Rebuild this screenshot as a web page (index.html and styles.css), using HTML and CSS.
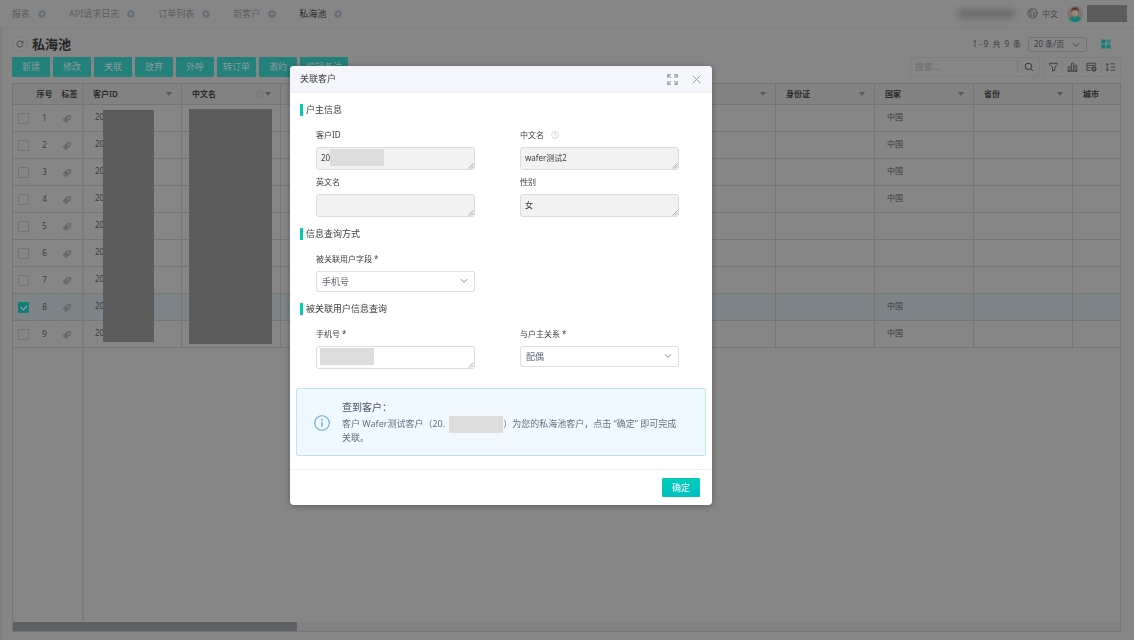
FILE: index.html
```html
<!DOCTYPE html>
<html lang="zh-CN">
<head>
<meta charset="utf-8">
<meta name="viewport" content="width=device-width, initial-scale=1">
<title>私海池</title>
<link rel="stylesheet" href="styles.css">
</head>
<body>
<svg class="defs" aria-hidden="true">
  <symbol id="close-dot" viewBox="0 0 8 8"><circle cx="4" cy="4" r="3.800" fill="#666e76"/><path d="M2.700 2.700l2.600 2.600m0-2.600L2.700 5.300" stroke="#8a8a8a" stroke-width=".9"/></symbol>
  <symbol id="tag" viewBox="0 0 10 10"><path fill="#6a6a6a" fill-rule="evenodd" d="M5.400 1.300L8.400 1q.8 0 .8.800L9 4.600 4.600 8.700q-.6.5-1.200 0L1.100 6.500q-.5-.6 0-1.200zM6.700 2.500a1 1 0 1 0 .01 0z"/></symbol>
  <symbol id="chevron" viewBox="0 0 8 6"><path d="M1 1.300l3 3 3-3" fill="none" stroke="currentColor"/></symbol>
  <symbol id="help" viewBox="0 0 8 8"><circle cx="4" cy="4" r="3.500" fill="none" stroke="currentColor" stroke-width=".7"/><path d="M2.900 3.200q0-1.200 1.100-1.200t1.100 1q0 .7-.7 1Q4 4.300 4 4.900M4 5.500v.8" fill="none" stroke="currentColor" stroke-width=".7"/></symbol>
  <symbol id="grip" viewBox="0 0 6 6"><path d="M.5 5.500l5-5M3 5.500L5.500 3" stroke="#888" stroke-width=".7"/></symbol>
</svg>

<div class="app">
  <header class="topbar">
    <nav class="tabs">
      <a class="tab" href="#">报表<svg><use href="#close-dot"/></svg></a>
      <a class="tab" href="#">API请求日志<svg><use href="#close-dot"/></svg></a>
      <a class="tab" href="#">订单列表<svg><use href="#close-dot"/></svg></a>
      <a class="tab" href="#">新客户<svg><use href="#close-dot"/></svg></a>
      <a class="tab active" href="#">私海池<svg><use href="#close-dot"/></svg></a>
    </nav>
    <div class="user">
      <span class="company"></span>
      <button class="lang" type="button"><svg viewBox="0 0 11 11"><circle cx="5.500" cy="5.500" r="4.800" fill="none" stroke="#4a4a4a" stroke-width=".8"/><path d="M2.500 2.200l2.300-.5.8 1.200-1.500 1-.3 1.300-2-.7zM6.300 4.800l2.500-.7.8 1.400-1.500 1.300-.5 2.400-1-.2-.2-2.200zM2.600 6l1.700.8-.5 2.200z" fill="none" stroke="#4a4a4a" stroke-width=".7"/></svg>中文</button>
      <svg class="avatar" viewBox="0 0 16 16"><circle cx="8" cy="8" r="8" fill="#7d7572"/><path d="M2 13q2-3 6-3t6 3q-2 3-6 3t-6-3z" fill="#138079"/><path d="M6.500 9h3v2q-1.500 1.300-3 0z" fill="#94766a"/><path d="M5 4.500h6V7q0 3-3 3T5 7z" fill="#a08578"/><path d="M4.300 5.500Q3.800 1.500 8 1.200q4.200.2 3.700 4.300l-.8.3q0-1.600-1-2-2 .8-3.800.2-.8.500-.9 1.700z" fill="#5b3631"/></svg>
      <span class="username"></span>
    </div>
  </header>

  <main class="page">
    <div class="heading">
      <button class="refresh" type="button" aria-label="刷新"><svg viewBox="0 0 8 8"><path d="M6.300 2.100A3 3 0 1 0 7 4.500M7 1v2H5" fill="none" stroke="#3c3c3c" stroke-width=".8"/></svg></button>
      <h1>私海池</h1>
      <span class="count">1 - 9&ensp;共&ensp;9&ensp;条</span>
      <span class="picker size"><select aria-label="每页条数"><option>20 条/页</option></select><svg><use href="#chevron"/></svg></span>
      <svg class="grid-icon" viewBox="0 0 10 10"><path d="M.5.500h4v4h-4zM.5 5.500h4v4h-4zM5.500 5.500h4v4h-4z" fill="#117f75"/><path d="M6.100 1.100h2.800v2.800H6.100z" fill="none" stroke="#117f75"/></svg>
    </div>
    <div class="toolbar">
      <button class="action" type="button">新建</button>
      <button class="action" type="button">修改</button>
      <button class="action" type="button">关联</button>
      <button class="action" type="button">放弃</button>
      <button class="action" type="button">外呼</button>
      <button class="action" type="button">转订单</button>
      <button class="action" type="button">邀约</button>
      <button class="action" type="button">编辑备注</button>
      <div class="search"><input type="text" placeholder="搜索..." aria-label="搜索"><button type="button" aria-label="搜索"><svg viewBox="0 0 10 10"><circle cx="4.400" cy="4.400" r="3.200" fill="none" stroke="#333"/><path d="M6.800 6.800L9 9" stroke="#333"/></svg></button></div>
      <div class="tools">
        <button type="button" aria-label="筛选"><svg viewBox="0 0 10 10"><path d="M1 1.300h8v1.300L6.300 5.300v2.900l-2.300.8V5.300L1 2.600z" fill="none" stroke="#3a3a3a" stroke-width=".9"/></svg></button>
        <button type="button" aria-label="图表"><svg viewBox="0 0 10 10"><path d="M.7 4.500h1.800v4.200H.7zM4 1h2v7.700H4zM7.500 3.300h1.800v5.400H7.500zM0 9.300h10" fill="none" stroke="#3a3a3a" stroke-width=".8"/></svg></button>
        <button type="button" aria-label="列设置"><svg viewBox="0 0 12 10"><path d="M1 .8h9.500v2.400H1zM1 5.800h4M1 8.800h4M1 3v6" fill="none" stroke="#3a3a3a" stroke-width=".9"/><circle cx="8.700" cy="7" r="2.100" fill="none" stroke="#3a3a3a" stroke-width="1.400"/><circle cx="8.700" cy="7" r=".6" fill="#3a3a3a"/></svg></button>
        <button type="button" aria-label="行高"><svg viewBox="0 0 12 10"><path d="M2.500 1v8M.8 2.700L2.500 1l1.700 1.700M.8 7.300L2.500 9l1.700-1.700M6 1.500h5M6 5h5M6 8.500h5" fill="none" stroke="#3a3a3a" stroke-width=".9"/></svg></button>
      </div>
    </div>

    <div class="grid">
      <table>
        <colgroup><col class="c-check"><col class="c-no"><col class="c-tag"><col span="11" class="c-data"></colgroup>
        <thead><tr><th></th><th>序号</th><th>标签</th><th><div>客户ID<i></i></div></th><th><div>中文名<svg><use href="#help"/></svg><i></i></div></th><th><div>英文名<i></i></div></th><th><div>性别<i></i></div></th><th><div>手机号<i></i></div></th><th><div>邮箱<i></i></div></th><th><div>生日<i></i></div></th><th><div>身份证<i></i></div></th><th><div>国家<i></i></div></th><th><div>省份<i></i></div></th><th><div>城市<i></i></div></th></tr></thead>
        <tbody id="rows"></tbody>
      </table>
      <div class="frozen-line"></div>
      <div class="mask mask-id"></div>
      <div class="mask mask-name"></div>
      <div class="scroll"><div class="thumb"></div></div>
    </div>
  </main>
</div>

<div class="layer">
  <section class="dialog" role="dialog" aria-modal="true" aria-labelledby="dlg-title">
    <header class="dialog-head">
      <h2 id="dlg-title">关联客户</h2>
      <button type="button" aria-label="全屏"><svg class="expand" viewBox="0 0 11 11"><path d="M.7 3.900V.7h3.200M1 1l2.800 2.800M7.100.7h3.200v3.200M10 1L7.200 3.800M.7 7.100v3.200h3.200M1 10l2.800-2.800M7.100 10.300h3.200V7.100M10 10L7.200 7.200" fill="none" stroke="#a3a4a8" stroke-width="1.200"/></svg></button>
      <button type="button" aria-label="关闭"><svg class="close" viewBox="0 0 9 9"><path d="M.7.700l7.600 7.600m0-7.600L.7 8.300" stroke="#999" stroke-width=".9"/></svg></button>
    </header>
    <form class="dialog-body">
      <h3>户主信息</h3>
      <div class="fields">
        <div class="field"><label for="cid">客户ID</label><div class="area"><textarea id="cid" rows="1" readonly>20</textarea><span class="blot after-text"></span><svg><use href="#grip"/></svg></div></div>
        <div class="field"><label for="cn">中文名<svg><use href="#help"/></svg></label><div class="area"><textarea id="cn" rows="1" readonly>wafer测试2</textarea><svg><use href="#grip"/></svg></div></div>
        <div class="field"><label for="en">英文名</label><div class="area"><textarea id="en" rows="1" readonly></textarea><svg><use href="#grip"/></svg></div></div>
        <div class="field"><label for="sex">性别</label><div class="area"><textarea id="sex" rows="1" readonly>女</textarea><svg><use href="#grip"/></svg></div></div>
      </div>
      <h3>信息查询方式</h3>
      <div class="fields">
        <div class="field"><label for="key">被关联用户字段 *</label><div class="picker"><select id="key"><option>手机号</option></select><svg><use href="#chevron"/></svg></div></div>
      </div>
      <h3>被关联用户信息查询</h3>
      <div class="fields">
        <div class="field"><label for="phone">手机号 *</label><div class="area"><textarea id="phone" rows="1"></textarea><span class="blot"></span><svg><use href="#grip"/></svg></div></div>
        <div class="field"><label for="rel">与户主关系 *</label><div class="picker"><select id="rel"><option>配偶</option></select><svg><use href="#chevron"/></svg></div></div>
      </div>
      <div class="notice">
        <svg viewBox="0 0 16 16"><circle cx="8" cy="8" r="7.300" fill="none" stroke="#5aabf5" stroke-width="1.100"/><path d="M8 6.700v5" stroke="#5aabf5" stroke-width="1.400"/><circle cx="8" cy="4.700" r=".9" fill="#5aabf5"/></svg>
        <div>
          <h4>查到客户：</h4>
          <p>客户 Wafer测试客户（20.<span class="redacted"></span>）为您的私海池客户，点击 “确定” 即可完成关联。</p>
        </div>
      </div>
    </form>
    <footer class="dialog-foot"><button class="confirm" type="button">确定</button></footer>
  </section>
</div>
<script src="rows.js"></script>
</body>
</html>
```
FILE: styles.css
```css
* { box-sizing: border-box; }
body {
  margin: 0;
  background: #868686;
  color: #3c3c3c;
  font: 8px/12px "Noto Sans", "Noto Sans CJK SC", sans-serif;
}
button, input, select, textarea { margin: 0; padding: 0; border: 0; background: none; color: inherit; font: inherit; }
h1, h2, h3, h4, p { margin: 0; font-weight: 400; }
svg { display: block; flex: none; }
a { color: inherit; text-decoration: none; }
.defs { position: absolute; width: 0; height: 0; }
.app { display: flex; flex-direction: column; height: 100vh; overflow: hidden; }

.topbar { display: flex; align-items: center; justify-content: space-between; height: 28px; padding: 0 7px 0 12px; border-bottom: 1px solid #808080; }
.tabs { display: flex; gap: 23px; }
.tab { display: flex; align-items: center; gap: 8px; color: #5c5c5c; font-size: 9px; }
.tab svg { width: 8px; height: 8px; }
.tab.active { color: #2c2c2c; }
.user { display: flex; align-items: center; }
.company { width: 56px; height: 10px; margin-right: 13px; border-radius: 4px; background: #6c6c6c; filter: blur(3px); }
.lang { display: flex; align-items: center; gap: 4px; color: #444; }
.lang svg { width: 11px; height: 11px; }
.avatar { width: 16px; height: 16px; margin: 0 4px 0 9px; }
.username { width: 40px; height: 17px; background: #5c5c5c; }

.page { display: flex; flex: 1; flex-direction: column; min-height: 0; padding: 7px 13px 8px 12px; box-shadow: inset 3px 0 3px -2px #777; }
.heading { display: flex; align-items: center; height: 18px; }
.refresh { display: grid; place-items: center; width: 16px; height: 16px; border: 1px solid #7d7d7d; border-radius: 50%; }
.refresh svg { width: 8px; height: 8px; }
h1 { flex: 1; margin-left: 4px; color: #272727; font-size: 13px; font-weight: 700; line-height: 18px; }
.count { margin-right: 7px; color: #3c3c3c; }
.picker { position: relative; display: flex; }
.picker svg { position: absolute; top: 7px; right: 7px; width: 8px; height: 6px; color: #888; pointer-events: none; }
.picker select { width: 100%; height: 21px; padding: 0 5px; border: 1px solid #dcdfe6; border-radius: 2px; appearance: none; color: #606676; font-size: 9px; }
.size { width: 59px; margin-right: 14px; }
.size select { height: 15px; border-color: #737373; border-radius: 3px; color: #3a3c44; font-size: 8px; line-height: 12px; }
.size svg { top: 5px; color: #505050; }
.grid-icon { width: 10px; height: 10px; margin-right: 10px; }

.toolbar { display: flex; gap: 3px; margin-top: 4px; }
.action { min-width: 38px; height: 20px; padding: 0 6px; border-radius: 1px; background: #23807a; color: #8b9c9a; font-size: 9px; }
.search { display: flex; width: 130px; height: 20px; margin-left: auto; border: 1px solid #7e7e7e; border-radius: 2px; }
.search input { flex: 1; min-width: 0; margin: 3px 0; padding-left: 4px; border-right: 1px solid #7a7a7a; font-size: 9px; }
.search input::placeholder { color: #6a6a6a; }
.search button { display: grid; place-items: center; width: 21px; }
.search svg { width: 10px; height: 10px; }
.tools { display: flex; align-items: center; width: 78px; border: 1px solid #7e7e7e; border-radius: 2px; }
.tools button { display: grid; flex: 1; place-items: center; height: 12px; }
.tools button + button { border-left: 1px solid #7d7d7d; }
.tools svg { width: 11px; height: 10px; }

.grid { position: relative; flex: 1; margin-top: 6px; border: 1px solid #757575; overflow: hidden; }
table { width: 1159px; border-collapse: separate; border-spacing: 0; table-layout: fixed; }
.c-check { width: 20px; }
.c-no { width: 24px; }
.c-tag { width: 26px; }
.c-data { width: 99px; }
th, td { padding: 0; border-right: 1px solid #757575; border-bottom: 1px solid #757575; text-align: left; }
th { height: 21px; background: #828282; color: #2a2a2a; font-weight: 600; text-align: center; }
th div { display: flex; align-items: center; padding: 0 9px 0 10px; }
th i { margin-left: auto; border: 3px solid transparent; border-top: 4px solid #525a61; border-bottom: 0; }
th svg { width: 8px; height: 8px; margin-left: auto; color: #727272; }
th svg + i { margin-left: 1px; }
td { height: 27px; padding: 0 0 2px 12px; }
th:nth-child(-n+2), td:nth-child(-n+2) { border-right-color: transparent; }
td:nth-child(-n+3) { padding: 0; text-align: center; }
td svg { width: 10px; height: 10px; margin: 2px 0 0 5px; }
td input { display: block; width: 11px; height: 11px; margin-left: 5px; border: 1px solid #747474; border-radius: 1px; appearance: none; }
td input:checked { border-color: #157d74; background: #157d74; }
td input:checked::after { content: ""; display: block; width: 3px; height: 5px; margin: 1px 0 0 3px; border: solid #aaa; border-width: 0 1px 1px 0; transform: rotate(45deg); }
.selected td { background: #7c8487; }
.frozen-line { position: absolute; top: 0; bottom: 9px; left: 69px; width: 2px; background: #7b7b7b; }
.mask { position: absolute; background: #5c5c5c; }
.mask-id { top: 26px; left: 90px; width: 51px; height: 232px; }
.mask-name { top: 25px; left: 176px; width: 83px; height: 235px; }
.scroll { position: absolute; right: 0; bottom: 0; left: 0; height: 9px; background: #818181; }
.thumb { width: 284px; height: 9px; background: #5e5f63; }

.layer { position: fixed; inset: 0; padding: 66px 0 0 290px; }
.dialog { width: 422px; border-radius: 4px; background: #fff; box-shadow: 0 1px 6px rgba(0, 0, 0, .3); overflow: hidden; }
.dialog-head { display: flex; align-items: center; gap: 14px; height: 27px; padding: 0 11px 0 10px; border-bottom: 1px solid #eff0f5; background: #f5f6fb; }
.dialog-head h2 { flex: 1; font-size: 9px; }
.expand { width: 11px; height: 11px; }
.close { width: 9px; height: 9px; }
.dialog-body { padding: 11px 6px 13px; }
h3 { margin-left: 4px; padding-left: 3px; border-left: 3px solid #00ceb6; font-size: 9px; line-height: 12px; }
.fields { display: grid; grid-template-columns: 159px 159px; gap: 5px 45px; padding: 12px 20px 11px; }
.field label { display: flex; align-items: center; height: 14px; margin-bottom: 5px; }
.field label svg { width: 8px; height: 8px; margin-left: 7px; color: #ccc; }
.area { position: relative; display: flex; }
.area svg { position: absolute; right: 1px; bottom: 1px; width: 6px; height: 6px; }
textarea { width: 100%; height: 23px; padding: 4px; border: 1px solid #dcdcdc; border-radius: 3px; resize: none; overflow: hidden; }
textarea:read-only { background: #f2f2f2; }
.blot { position: absolute; top: 2px; left: 4px; width: 54px; height: 17px; background: #ddd; }
.after-text { left: 14px; }
.notice { display: flex; align-items: center; gap: 12px; margin-top: 8px; padding: 11px 12px 10px 17px; border: 1px solid #bae3ff; border-radius: 2px; background: #f0f9ff; }
.notice > svg { width: 16px; height: 16px; }
.notice h4 { color: #4a5366; font-size: 10px; line-height: 14px; }
.notice p { margin-top: 3px; padding-right: 10px; color: #657080; font-size: 9px; line-height: 14px; }
.redacted { display: inline-block; width: 54px; height: 17px; margin: -2px 0 -2px 4px; background: #ddd; vertical-align: middle; }
.dialog-foot { display: flex; justify-content: flex-end; padding: 8px 12px; border-top: 1px solid #eee; }
.confirm { width: 38px; height: 19px; border-radius: 1px; background: linear-gradient(#00cebb, #00bfc0); color: #fff; font-size: 9px; }
```
FILE: rows.js
```js
const countries = ["中国", "中国", "中国", "中国", "", "", "", "中国", "中国"];
document.getElementById("rows").innerHTML = countries.map((country, i) => {
  const selected = i === 7;
  return `<tr class="${selected ? "selected" : ""}">
    <td><input type="checkbox" aria-label="选择第${i + 1}行" ${selected ? "checked" : ""}></td>
    <td>${i + 1}</td><td><svg><use href="#tag"/></svg></td><td>20</td>
    ${"<td></td>".repeat(7)}<td>${country}</td><td></td><td></td></tr>`;
}).join("");
```
